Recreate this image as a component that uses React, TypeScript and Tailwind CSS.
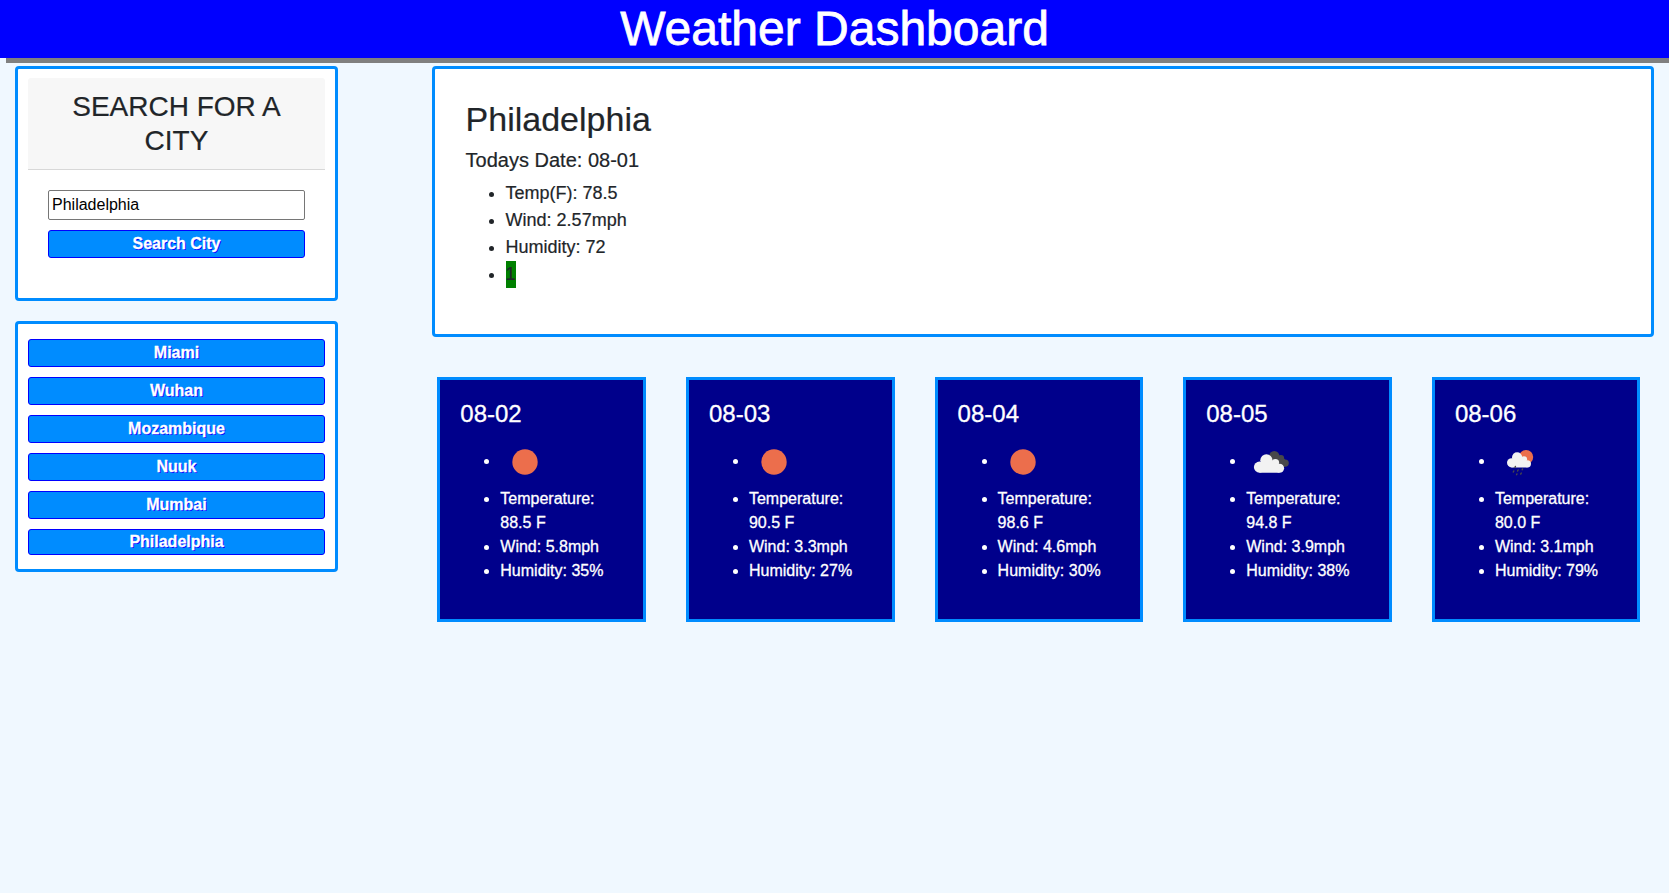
import type { ReactNode } from "react";

const cities = ["Miami", "Wuhan", "Mozambique", "Nuuk", "Mumbai", "Philadelphia"];

function SunIcon() {
  return (
    <svg className="block h-[50px] w-[50px]" viewBox="0 0 50 50">
      <circle cx="25" cy="25" r="12.7" fill="#ec6e4c" />
    </svg>
  );
}

function CloudsIcon() {
  return (
    <svg className="block h-[50px] w-[50px]" viewBox="0 0 50 50">
      <g fill="#48484a">
        <circle cx="28.3" cy="19.2" r="5.2" />
        <circle cx="34.9" cy="21.3" r="3.2" />
        <circle cx="39.1" cy="26.1" r="3.7" />
        <path d="M28 19h7l4 3.600v7.100l-9-1z" />
      </g>
      <g fill="#f2f2f2">
        <circle cx="13.5" cy="30.1" r="5.6" />
        <circle cx="20.4" cy="23.3" r="6.1" />
        <circle cx="29.4" cy="25.6" r="3.7" />
        <circle cx="33.6" cy="31.2" r="4.5" />
        <path d="M13.5 25h14l6 3v7.700h-20z" />
      </g>
    </svg>
  );
}

function RainIcon() {
  return (
    <svg className="block h-[50px] w-[50px]" viewBox="0 0 50 50">
      <circle cx="31.1" cy="20" r="7.1" fill="#ec6e4c" />
      <g fill="#f2f2f2">
        <circle cx="16.6" cy="25.8" r="4.6" />
        <circle cx="22.1" cy="20.4" r="5.1" />
        <circle cx="29" cy="22.3" r="3.1" />
        <circle cx="32.4" cy="26.8" r="3.6" />
        <path d="M16.6 22h11.400l4.400 3v5.400h-15.800z" />
      </g>
      <g stroke="#48484a" strokeWidth="1.4" strokeLinecap="round">
        <path d="M20.400 29.500l-.4.900M23.100 33l-.5 1M18.800 34l-.5 1M27.500 32l-.3.800M21.900 37l-.3.700M26.300 36l-.6 1.100" />
      </g>
    </svg>
  );
}

const forecast = [
  { date: "08-02", icon: <SunIcon />, temp: "88.5", wind: "5.8", humidity: "35" },
  { date: "08-03", icon: <SunIcon />, temp: "90.5", wind: "3.3", humidity: "27" },
  { date: "08-04", icon: <SunIcon />, temp: "98.6", wind: "4.6", humidity: "30" },
  { date: "08-05", icon: <CloudsIcon />, temp: "94.8", wind: "3.9", humidity: "38" },
  { date: "08-06", icon: <RainIcon />, temp: "80.0", wind: "3.1", humidity: "79" },
];

function CityButton({ children, short = false }: { children: ReactNode; short?: boolean }) {
  return (
    <button
      className={
        "block w-full rounded-[3px] border border-[#0000ff] bg-[#008cff] text-center text-[16px] font-bold text-white [text-shadow:1px_1px_#0000ff] [-webkit-text-stroke:0.3px_#ffffff] " +
        (short ? "h-[26px] leading-[24px]" : "h-[28px] leading-[26px]")
      }
    >
      {children}
    </button>
  );
}

export default function App() {
  return (
    <div className="min-h-screen bg-[#f0f8ff] font-['Liberation_Sans',Arial,sans-serif] text-[#212529]">
      <header className="h-[58px] bg-[#0000ff] text-center shadow-[6px_5px_0_#808080]">
        <h1 className="text-[48px] leading-[57.6px] text-white [-webkit-text-stroke:0.8px_#ffffff]">
          Weather Dashboard
        </h1>
      </header>
      <div className="flex items-start gap-[94px] overflow-hidden pt-2 pl-[15px]">
        <aside className="flex w-[323px] shrink-0 flex-col gap-5">
          <section className="h-[235px] rounded border-[3px] border-[#008cff] bg-white px-[10px] pt-[9px]">
            <h2 className="h-[92px] rounded-t-[3px] border-b border-[#d8d8d8] bg-[#f7f7f7] py-3 text-center text-[28px] leading-[33.6px] [-webkit-text-stroke:0.2px_#212529]">
              SEARCH FOR A
              <br />
              CITY
            </h2>
            <div className="flex flex-col gap-[10px] px-5 pt-5">
              <input
                defaultValue="Philadelphia"
                className="h-[30px] w-full rounded-[2px] border border-[#767676] bg-white px-[3px] text-[16px] text-black"
              />
              <CityButton>Search City</CityButton>
            </div>
          </section>
          <section className="flex h-[251px] flex-col gap-[10px] rounded border-[3px] border-[#008cff] bg-white px-[10px] pt-[15px]">
            {cities.map((city, i) => (
              <CityButton key={city} short={i === cities.length - 1}>
                {city}
              </CityButton>
            ))}
          </section>
        </aside>
        <main className="w-[1222px] shrink-0">
          <section className="h-[271px] rounded border-[3px] border-[#008cff] bg-white px-[30.6px] pt-[30px] [-webkit-text-stroke:0.2px_#212529]">
            <h2 className="text-[34px] leading-[41px]">Philadelphia</h2>
            <p className="pt-2 text-[20px] leading-6">Todays Date: 08-01</p>
            <ul className="list-disc pt-2 pl-10 text-[18px] leading-[27px]">
              <li>Temp(F): 78.5</li>
              <li>Wind: 2.57mph</li>
              <li>Humidity: 72</li>
              <li>
                <span className="inline-block bg-[#008000]">1</span>
              </li>
            </ul>
          </section>
          <section className="flex gap-[40.1px] pt-10 pl-[5.3px]">
            {forecast.map((day) => (
              <article
                key={day.date}
                className="h-[245px] w-[208.57px] shrink-0 border-[3px] border-[#008cff] bg-[#00008b] px-5 pt-[19px] text-white [-webkit-text-stroke:0.3px_#ffffff]"
              >
                <h3 className="text-[24px] leading-[29px]">{day.date}</h3>
                <ul className="list-disc pt-[9px] pl-10 text-[16px] leading-6">
                  <li>
                    <span className="inline-block h-[50px] align-middle">{day.icon}</span>
                  </li>
                  <li>
                    Temperature:
                    <br />
                    {day.temp} F
                  </li>
                  <li>Wind: {day.wind}mph</li>
                  <li>Humidity: {day.humidity}%</li>
                </ul>
              </article>
            ))}
          </section>
        </main>
      </div>
    </div>
  );
}
